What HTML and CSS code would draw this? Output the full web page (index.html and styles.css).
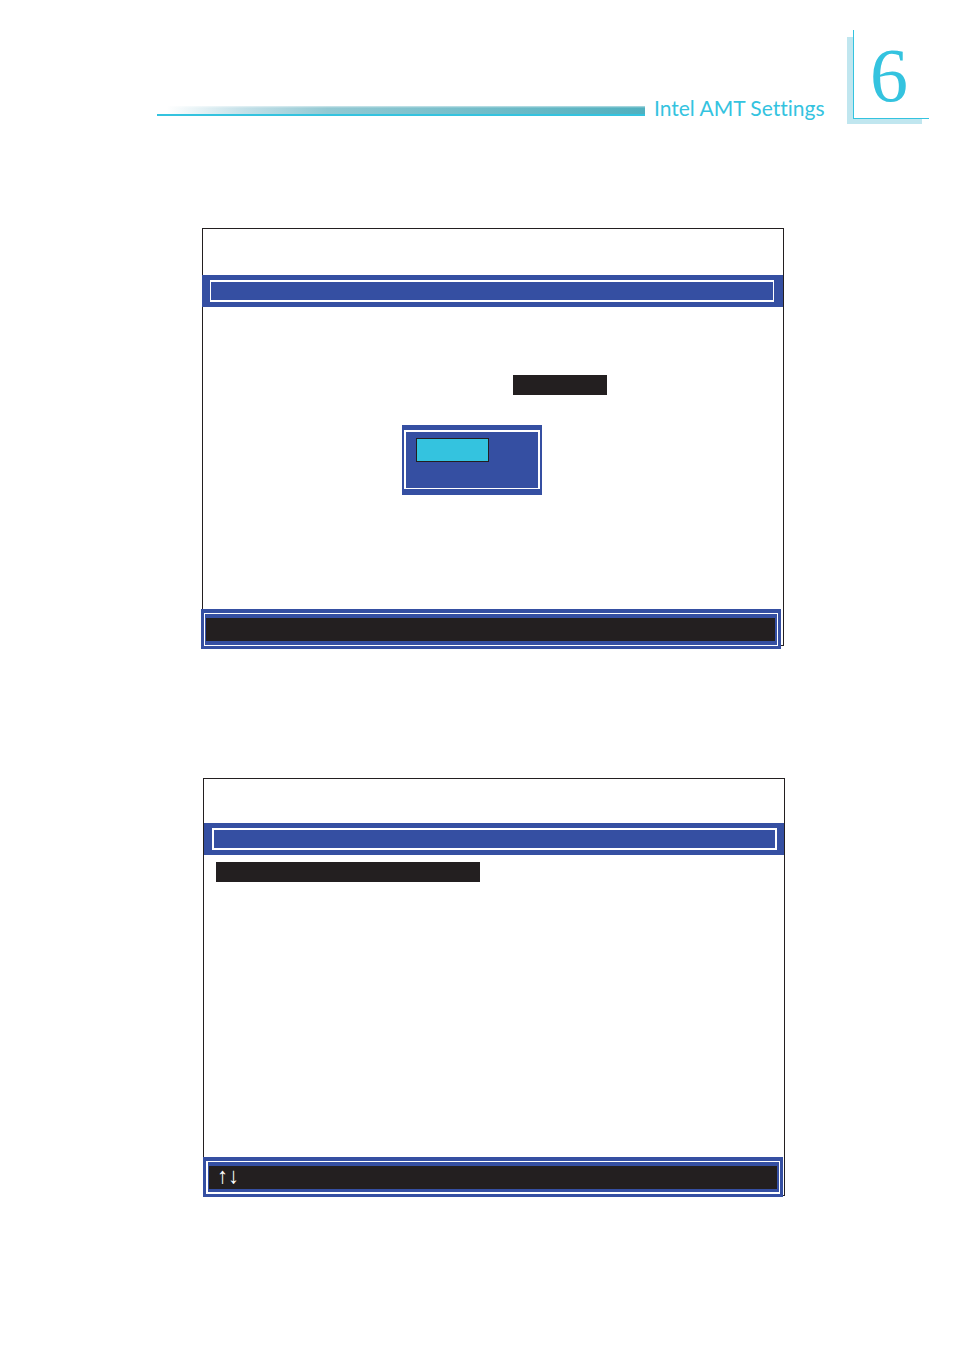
FILE: index.html
```html
<!DOCTYPE html>
<html lang="en">
<head>
    <meta charset="UTF-8">
    <meta name="viewport" content="width=device-width, initial-scale=1.0">
    <title>Intel AMT Settings</title>
    <link rel="stylesheet" href="styles.css">
</head>
<body>
    <header class="page-header">
        <div class="rule"></div>
        <h1>Intel AMT Settings</h1>
        <div class="chapter">
            <span class="chapter-number">6</span>
        </div>
    </header>

    <main>
        <section class="screen">
            <div class="title-bar">
                <div class="title-frame"></div>
            </div>
            <div class="screen-body">
                <div class="value"></div>
                <div class="popup">
                    <div class="popup-frame">
                        <div class="choice"></div>
                    </div>
                </div>
            </div>
            <div class="key-bar">
                <div class="key-frame">
                    <div class="keys"></div>
                </div>
            </div>
        </section>

        <section class="screen second">
            <div class="title-bar">
                <div class="title-frame"></div>
            </div>
            <div class="screen-body">
                <div class="menu-item"></div>
            </div>
            <div class="key-bar">
                <div class="key-frame">
                    <div class="keys">↑↓</div>
                </div>
            </div>
        </section>
    </main>
</body>
</html>
```
FILE: styles.css
```css
* {
    box-sizing: border-box;
}
body {
    margin: 0;
    background-color: #fff;
    color: #34c3df;
    font-family: Lato, sans-serif;
}
.page-header {
    display: flex;
    align-items: flex-start;
    padding: 30px 25px 0 157px;
}
.rule {
    flex: 1;
    height: 10px;
    margin-top: 76px;
    border-bottom: 2px solid #34c3df;
    background: linear-gradient(rgba(255, 255, 255, 0.6), rgba(255, 255, 255, 0) 2px), linear-gradient(to right, #fff 2%, #c3e0e8 18%, #93c9d3 35%, #50b0bf);
}
h1 {
    margin: 64px 0 0;
    width: 177px;
    padding-left: 9px;
    font-size: 21px;
    font-weight: normal;
    font-variant-ligatures: none;
    line-height: 28px;
    white-space: nowrap;
}
/* white card with a pale block showing behind its left and bottom edges */
.chapter {
    width: 82px;
    margin-left: 25px;
    padding: 0 0 5px 6px;
    background: linear-gradient(#c0e6ef, #c0e6ef) 0 7px / 75px 100% no-repeat;
}
.chapter-number {
    display: block;
    height: 89px;
    border-left: 1px solid #34c3df;
    border-bottom: 1px solid #34c3df;
    background-color: #fff;
    font-family: "Liberation Serif", serif;
    font-size: 76px;
    line-height: 90px;
    padding-left: 16px;
}
main {
    padding: 104px 170px 60px 202px;
}
.screen {
    border: 1px solid #231f20;
}
.title-bar {
    height: 32px;
    margin: 46px 0 0 -1px;
    padding: 5px 9px 5px 8px;
    background-color: #354fa2;
}
.title-frame {
    height: 22px;
    border: 2px solid #fff;
    border-width: 2px 1px;
}
.screen-body {
    height: 302px;
    padding: 68px 0 0 199px;
}
.value {
    width: 94px;
    height: 20px;
    margin: 0 0 30px 111px;
    background-color: #231f20;
}
.popup {
    width: 140px;
    height: 70px;
    padding: 5px 2px 6px;
    background-color: #354fa2;
}
.popup-frame {
    height: 59px;
    padding: 6px 10px;
    border: 2px solid #fff;
    border-bottom-width: 1px;
}
.choice {
    width: 73px;
    height: 24px;
    border: 1px solid #231f20;
    background-color: #34c3df;
}
.key-bar {
    margin: 0 2px -4px -2px;
    padding: 4px 3px 3px;
    background-color: #354fa2;
}
.key-frame {
    padding: 4px 2px 4px 1px;
    border: 1px solid #fff;
}
.keys {
    height: 23px;
    padding-left: 8px;
    background-color: #231f20;
    color: #fff;
    font-family: "Liberation Sans", sans-serif;
    font-size: 22px;
    line-height: 20px;
}
.second {
    margin: 132px -1px 0 1px;
}
.second .title-bar {
    margin: 44px 0 0;
    padding: 5px 7px 5px 8px;
}
.second .title-frame {
    border-width: 2px;
}
.second .screen-body {
    padding: 7px 12px;
}
.menu-item {
    width: 264px;
    height: 20px;
    background-color: #231f20;
}
.second .key-bar {
    margin: 0 1px -2px -1px;
}
.second .key-frame {
    padding-bottom: 3px;
    border-width: 1px 1px 2px 2px;
}
```
